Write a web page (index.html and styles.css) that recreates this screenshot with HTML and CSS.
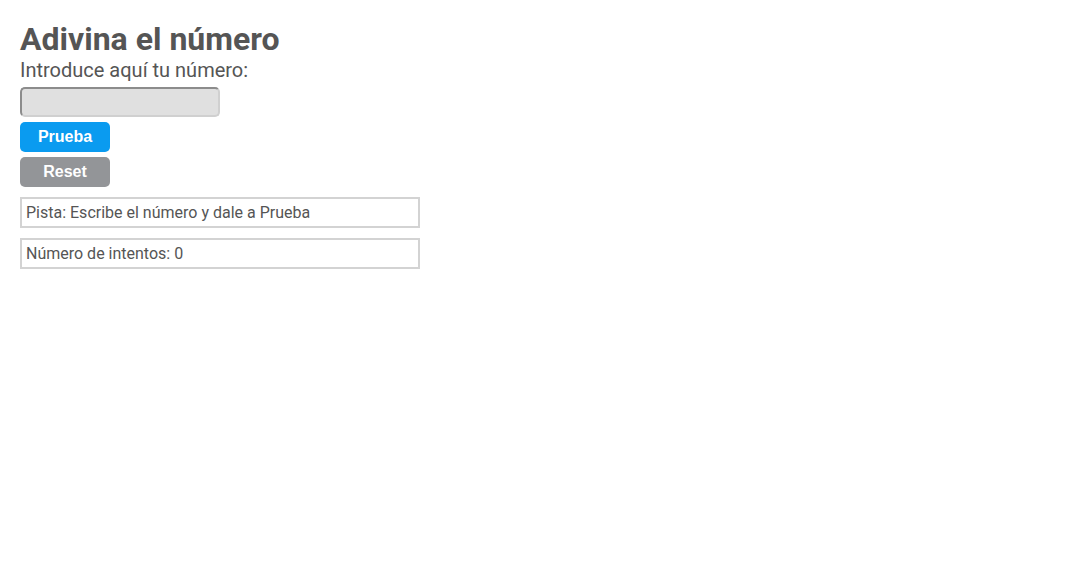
FILE: index.html
```html
<!DOCTYPE html>
<html lang="es">
<head>
<meta charset="utf-8">
<title>Adivina el número</title>
<link rel="stylesheet" href="styles.css">
</head>
<body>
<main class="game">
  <h1 class="title">Adivina el número</h1>
  <label class="prompt" for="guess">Introduce aquí tu número:</label>
  <input class="guess" id="guess" type="text">
  <button class="btn btn-try" type="button">Prueba</button>
  <button class="btn btn-reset" type="button">Reset</button>
  <div class="info">Pista: Escribe el número y dale a Prueba</div>
  <div class="info">Número de intentos: 0</div>
</main>
</body>
</html>
```
FILE: styles.css
```css
html, body {
  margin: 0;
  padding: 0;
  background: #fff;
}
body {
  font-family: Roboto, "Liberation Sans", sans-serif;
  color: #555;
}
.game {
  padding: 20px;
  display: flex;
  flex-direction: column;
  align-items: flex-start;
}
.title {
  margin: 0;
  font-size: 32px;
  font-weight: 700;
  line-height: 38px;
}
.prompt {
  font-size: 20px;
  line-height: 24px;
  margin-bottom: 5px;
}
.guess {
  box-sizing: border-box;
  width: 200px;
  height: 30px;
  margin: 0 0 5px 0;
  background: #e0e0e0;
  border: 2px solid #d0d0d0;
  border-top-color: #8c8c8c;
  border-left-color: #8c8c8c;
  border-radius: 5px;
  outline: none;
}
.btn {
  box-sizing: border-box;
  width: 90px;
  height: 30px;
  margin: 0 0 5px 0;
  border: none;
  border-radius: 5px;
  color: #fff;
  font-family: "Liberation Sans", Arial, sans-serif;
  font-weight: 700;
  font-size: 16px;
  padding: 0;
}
.btn-try { background: #0a9bf0; }
.btn-reset { background: #939598; margin-bottom: 10px; }
.info {
  box-sizing: border-box;
  width: 400px;
  height: 31px;
  border: 2px solid #d3d3d3;
  padding: 0 4px;
  font-size: 16px;
  line-height: 27px;
  margin-bottom: 10px;
}
```
